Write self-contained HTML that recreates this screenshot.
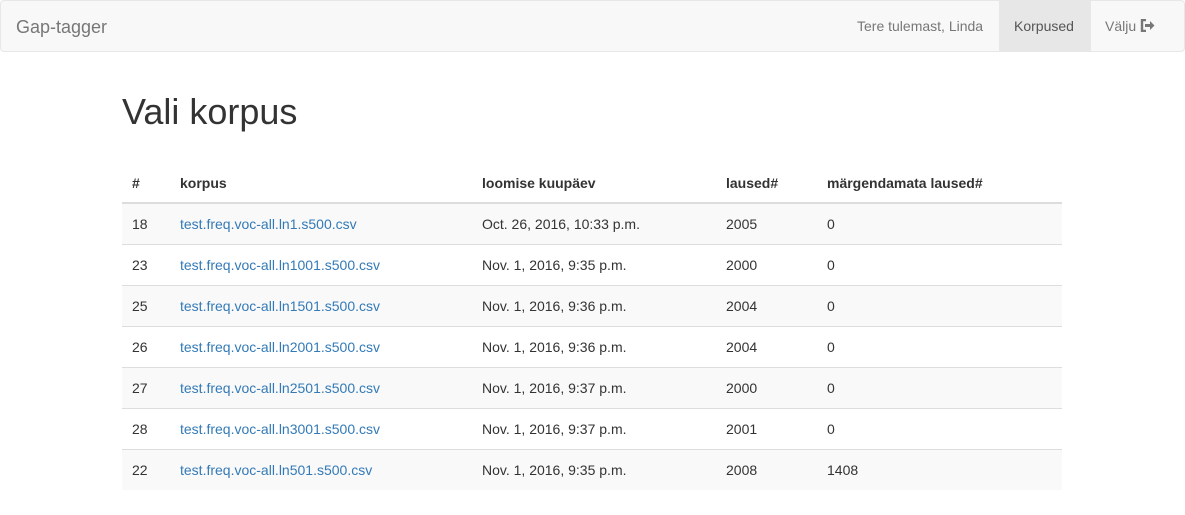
<!DOCTYPE html>
<html><head><meta charset="utf-8"><style>
*{box-sizing:border-box}
body{margin:0;font-family:"Liberation Sans",Arial,sans-serif;font-size:14px;color:#333;background:#fff;width:1185px;height:515px;overflow:hidden}
.nav{position:absolute;left:0;top:0;width:1185px;height:52px;background:#f8f8f8;border:1px solid #e7e7e7;border-radius:4px}
.brand{position:absolute;left:15px;top:16px;font-size:18px;color:#777}
.nl{position:absolute;top:0;height:50px;line-height:50px;color:#777;padding:0 15px}
h1{position:absolute;left:122px;top:92px;margin:0;font-size:36px;font-weight:500;line-height:40px}
table{position:absolute;left:122px;top:162px;width:940px;border-collapse:collapse}
th,td{text-align:left;padding:0 8px;height:41px;border-top:1px solid #ddd}
th{border-top:0;border-bottom:2px solid #ddd;font-weight:bold;height:41px;padding-top:1px}
th:first-child,td:first-child{padding-left:10px}
tbody tr:nth-child(odd){background:#f9f9f9}
a{color:#337ab7;text-decoration:none}
</style></head><body>
<div class="nav">
<div class="brand">Gap-tagger</div>
<div class="nl" style="left:841px">Tere tulemast, Linda</div>
<div class="nl" style="left:998px;width:92px;background:#e7e7e7;color:#555">Korpused</div>
<div class="nl" style="left:1089px">Välju <svg width="15" height="13" viewBox="0 0 15 13" style="vertical-align:-1px"><path d="M6 1H2v11h4" fill="none" stroke="#777" stroke-width="2.4"/><path d="M5 5h5V2l4.5 4.5L10 11V8H5z" fill="#777"/></svg></div>
</div>
<h1>Vali korpus</h1>
<table>
<thead><tr><th style="width:50px">#</th><th style="width:302px">korpus</th><th style="width:244px">loomise kuupäev</th><th style="width:101px">laused#</th><th>märgendamata laused#</th></tr></thead>
<tbody>
<tr><td>18</td><td><a>test.freq.voc-all.ln1.s500.csv</a></td><td>Oct. 26, 2016, 10:33 p.m.</td><td>2005</td><td>0</td></tr>
<tr><td>23</td><td><a>test.freq.voc-all.ln1001.s500.csv</a></td><td>Nov. 1, 2016, 9:35 p.m.</td><td>2000</td><td>0</td></tr>
<tr><td>25</td><td><a>test.freq.voc-all.ln1501.s500.csv</a></td><td>Nov. 1, 2016, 9:36 p.m.</td><td>2004</td><td>0</td></tr>
<tr><td>26</td><td><a>test.freq.voc-all.ln2001.s500.csv</a></td><td>Nov. 1, 2016, 9:36 p.m.</td><td>2004</td><td>0</td></tr>
<tr><td>27</td><td><a>test.freq.voc-all.ln2501.s500.csv</a></td><td>Nov. 1, 2016, 9:37 p.m.</td><td>2000</td><td>0</td></tr>
<tr><td>28</td><td><a>test.freq.voc-all.ln3001.s500.csv</a></td><td>Nov. 1, 2016, 9:37 p.m.</td><td>2001</td><td>0</td></tr>
<tr><td>22</td><td><a>test.freq.voc-all.ln501.s500.csv</a></td><td>Nov. 1, 2016, 9:35 p.m.</td><td>2008</td><td>1408</td></tr>
</tbody></table>
</body></html>
